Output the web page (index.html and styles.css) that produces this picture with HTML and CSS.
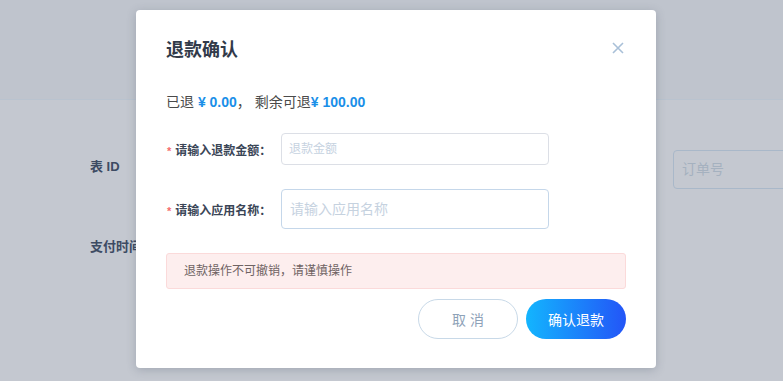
FILE: index.html
```html
<!DOCTYPE html>
<html>
  <head>
    <meta charset="UTF-8"/>
    <link rel="stylesheet" href="styles.css">
  </head>
  <body>
    <div class="page-header"></div>
    <div class="page-body">
      <div class="search-col">
        <div class="search-label">表 ID</div>
        <div class="search-label">支付时间</div>
      </div>
      <div class="search-input">订单号</div>
    </div>

    <div class="dialog">
      <div class="dialog-header">
        <span class="dialog-title">退款确认</span>
        <svg class="dialog-close" width="12" height="12" viewBox="0 0 12 12">
          <path d="M1 1 L11 11 M11 1 L1 11" stroke="#a9c0d8" stroke-width="1.6" fill="none"/>
        </svg>
      </div>
      <div class="refund-info">
        已退 <b class="money">¥ 0.00</b>， 剩余可退<b class="money">¥ 100.00</b>
      </div>
      <div class="form-row">
        <label class="form-label"><i class="req">*</i>请输入退款金额：</label>
        <div class="form-input small">退款金额</div>
      </div>
      <div class="form-row">
        <label class="form-label"><i class="req">*</i>请输入应用名称：</label>
        <div class="form-input large">请输入应用名称</div>
      </div>
      <div class="alert">退款操作不可撤销，请谨慎操作</div>
      <div class="dialog-footer">
        <button class="btn btn-cancel">取 消</button>
        <button class="btn btn-primary">确认退款</button>
      </div>
    </div>
  </body>
</html>
```

FILE: styles.css
```css
body
{
  margin: 0;
  padding: 0;
  width: 783px;
  height: 381px;
  overflow: hidden;
  background: #c4c8d0;
  font-family: "Liberation Sans", "Noto Sans CJK SC", sans-serif;
  position: relative;
}
.page-header
{
  height: 99px;
  background: #bfc4cd;
  border-bottom: 1px solid #b9c3cf;
}
.page-body
{
  display: flex;
  justify-content: space-between;
  padding: 50px 0 0 90px;
}
.search-col
{
  display: flex;
  flex-direction: column;
  gap: 62px;
  padding-top: 8px;
}
.search-label
{
  font-size: 13px;
  font-weight: bold;
  color: #3d4b63;
  line-height: 18px;
}
.search-input
{
  width: 120px;
  height: 39px;
  margin-right: -10px;
  box-sizing: border-box;
  border: 1px solid #a9b8c9;
  border-radius: 4px;
  padding-left: 8px;
  line-height: 37px;
  font-size: 14px;
  color: #a5b1bf;
}

.dialog
{
  position: absolute;
  left: 136px;
  top: 10px;
  width: 520px;
  height: 358px;
  box-sizing: border-box;
  padding: 26px 30px 0 30px;
  background: #fff;
  border-radius: 4px;
  box-shadow: 0 2px 10px rgba(60, 70, 90, 0.25);
}
.dialog-header
{
  display: flex;
  justify-content: space-between;
  align-items: center;
  height: 24px;
}
.dialog-title
{
  font-size: 18px;
  font-weight: bold;
  color: #313a49;
}
.dialog-close
{
  margin-right: 2px;
}
.refund-info
{
  margin-top: 32px;
  font-size: 14px;
  line-height: 20px;
  color: #4a4a4a;
}
.money
{
  color: #1a8fe8;
  font-weight: bold;
  font-size: 14px;
}
.form-row
{
  display: flex;
  align-items: center;
  margin-top: 21px;
}
.form-row + .form-row
{
  margin-top: 24px;
}
.form-label
{
  width: 115px;
  font-size: 12px;
  font-weight: bold;
  color: #3a4556;
}
.req
{
  font-style: normal;
  color: #f56c6c;
  font-size: 11px;
  margin: 0 4px 0 1px;
}
.form-input
{
  width: 268px;
  box-sizing: border-box;
  border-radius: 4px;
  color: #c6d2df;
}
.form-input.small
{
  height: 32px;
  line-height: 30px;
  border: 1px solid #dcdfe6;
  padding-left: 7px;
  font-size: 12px;
}
.form-input.large
{
  height: 40px;
  line-height: 38px;
  border: 1px solid #c5d7ea;
  padding-left: 8px;
  font-size: 14px;
}
.alert
{
  margin-top: 24px;
  height: 36px;
  box-sizing: border-box;
  line-height: 34px;
  padding-left: 17px;
  background: #fdeeee;
  border: 1px solid #fbdada;
  border-radius: 3px;
  font-size: 12px;
  color: #6f6363;
}
.dialog-footer
{
  display: flex;
  justify-content: flex-end;
  gap: 8px;
  margin-top: 10px;
}
.btn
{
  width: 100px;
  height: 40px;
  border-radius: 20px;
  font-family: inherit;
  font-size: 14px;
  cursor: pointer;
}
.btn-cancel
{
  background: #fff;
  border: 1px solid #c8d9e8;
  color: #8ea2b8;
}
.btn-primary
{
  border: none;
  color: #fff;
  background: linear-gradient(to right, #13b5fe, #2355f7);
}
```
